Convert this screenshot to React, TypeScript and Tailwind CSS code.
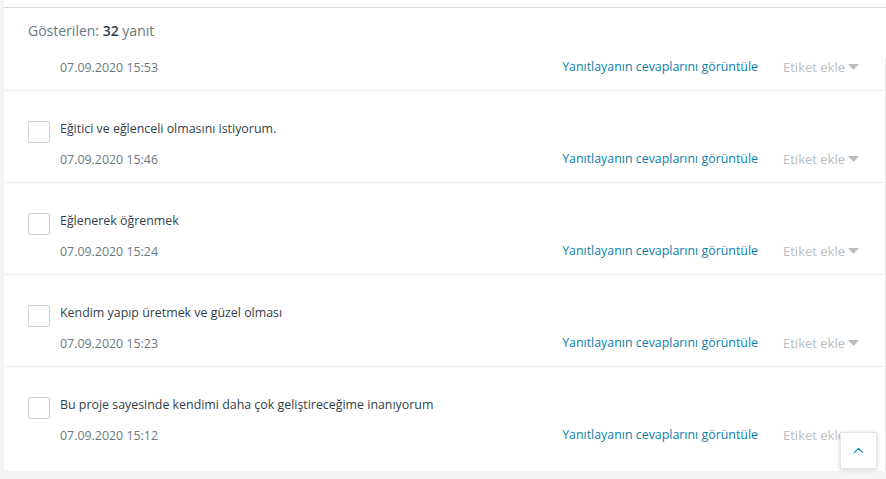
import { ChevronUp } from 'lucide-react';

const rows = [
  { text: 'Eğitici ve eğlenceli olmasını istiyorum.', date: '07.09.2020 15:46' },
  { text: 'Eğlenerek öğrenmek', date: '07.09.2020 15:24' },
  { text: 'Kendim yapıp üretmek ve güzel olması', date: '07.09.2020 15:23' },
  { text: 'Bu proje sayesinde kendimi daha çok geliştireceğime inanıyorum', date: '07.09.2020 15:12' },
];

function RowActions() {
  return (
    <div className="flex items-center -mt-[2px] pr-[26px]">
      <a className="text-[#0a7fad] cursor-pointer">Yanıtlayanın cevaplarını görüntüle</a>
      <span className="ml-[25px] flex items-center text-[13px] text-[#b8bdc0]">
        Etiket ekle
        <svg width="11" height="6" viewBox="0 0 11 6" className="ml-[3px]">
          <path d="M0 0h11L5.5 6z" fill="#b8bdc0" />
        </svg>
      </span>
    </div>
  );
}

export default function App() {
  return (
    <div
      className="relative w-[886px] h-[479px] overflow-hidden bg-[#f3f4f4] pl-[4px] pb-[8px] text-[12.4px] leading-5"
      style={{ fontFamily: '"Open Sans", "Liberation Sans", sans-serif' }}
    >
      <div className="h-full bg-white rounded-bl-[4px] flex flex-col">
        {/* previous section edge */}
        <div className="h-[8px] border-b border-[#d9dcdd] shrink-0" />

        {/* ── Header ─────────────────────────────── */}
        <div className="h-[50px] pt-[13px] pl-[24px] text-[14px] text-[#6b787f] shrink-0">
          Gösterilen: <span className="font-semibold text-[#333e48]">32</span> yanıt
        </div>

        <div className="flex-1 border-r border-[#ececec]">
          {/* partial row */}
          <div className="pb-[12px] border-b border-[#edeeee] flex justify-between">
            <span className="pl-[56px] text-[#6b787f]">07.09.2020 15:53</span>
            <RowActions />
          </div>

          {rows.map((r, i) => (
            <div
              key={i}
              className={`pt-[28px] pb-[12px] flex ${i < rows.length - 1 ? 'border-b border-[#edeeee]' : ''}`}
            >
              <div className="ml-[24px] mt-[2px] w-[22px] h-[22px] border border-[#cfd2d4] rounded-[2px] shrink-0" />
              <div className="ml-[10px] flex-1">
                <div className="text-[#333e48]">{r.text}</div>
                <div className="mt-[11px] flex justify-between">
                  <span className="text-[#6b787f]">{r.date}</span>
                  <RowActions />
                </div>
              </div>
            </div>
          ))}
        </div>
      </div>

      {/* scroll to top */}
      <button className="absolute left-[840px] top-[432px] w-[37px] h-[37px] bg-white border border-[#e3e5e6] shadow-[0_1px_4px_rgba(0,0,0,0.18)] flex items-center justify-center">
        <ChevronUp className="w-[17px] h-[17px] text-[#0a87b3]" strokeWidth={1.6} />
      </button>
    </div>
  );
}
